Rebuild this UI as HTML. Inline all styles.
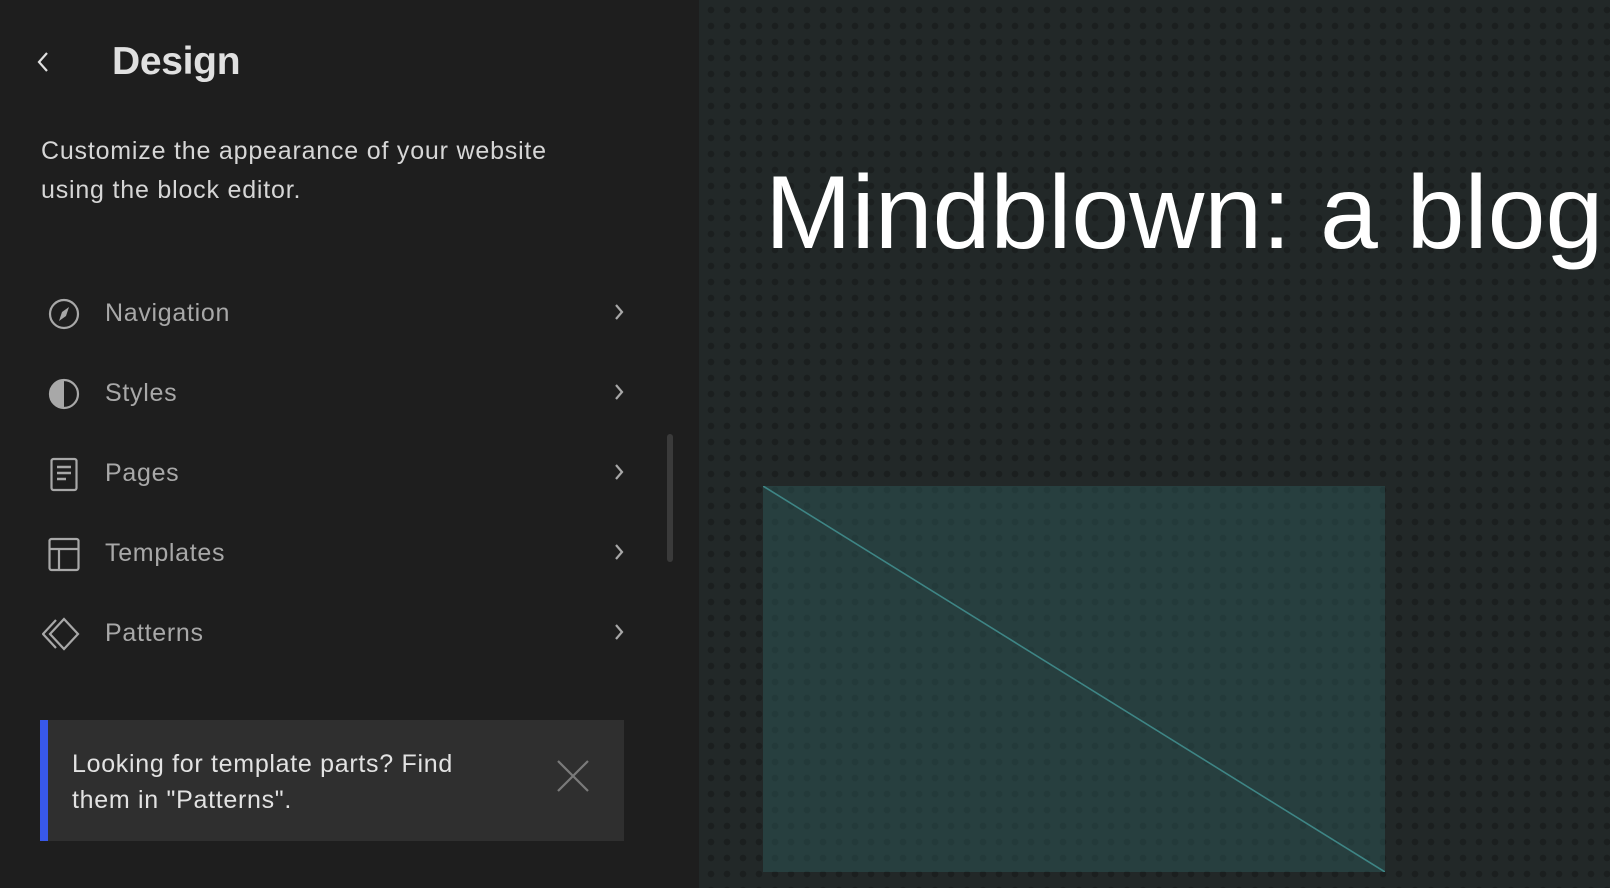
<!DOCTYPE html>
<html><head><meta charset="utf-8"><style>
*{margin:0;padding:0;box-sizing:border-box}
html,body{width:1610px;height:888px;overflow:hidden;background:#1e1e1e;font-family:"Liberation Sans",sans-serif}
.side{position:absolute;left:0;top:0;width:699px;height:888px;background:#1e1e1e}
.canvas{position:absolute;left:699px;top:0;width:911px;height:888px;background-color:#222828;
background-image:radial-gradient(circle,#1b1f1f 3px,transparent 3.6px);background-size:16px 16px;background-position:4px 2px;overflow:hidden}
h1{position:absolute;left:112px;top:40px;font-size:39px;font-weight:bold;color:#e0e0e0;letter-spacing:-0.3px}
.desc{position:absolute;left:41px;top:132px;font-size:25px;letter-spacing:0.8px;line-height:39px;color:#d6d6d6;width:640px}
.item{position:absolute;left:0;width:640px;height:40px}
.item .lbl{position:absolute;left:105px;top:7px;font-size:25px;letter-spacing:0.7px;color:#a8a8a8}
.item svg.ic{position:absolute;left:46px;top:4px}
.item svg.ch{position:absolute;left:612px;top:10px}
.scroll{position:absolute;left:667px;top:434px;width:6px;height:128px;border-radius:3px;background:#3a3a3a}
.notice{position:absolute;left:40px;top:720px;width:584px;height:121px;background:#2f2f2f;border-left:8px solid #3858e9}
.notice p{position:absolute;left:24px;top:26px;font-size:25px;letter-spacing:0.7px;line-height:36px;color:#e2e2e2;width:500px}
.title{position:absolute;left:66px;top:154px;font-size:104px;color:#fff;white-space:nowrap;letter-spacing:0}
</style></head><body>
<div class="side">
<svg style="position:absolute;left:34px;top:49px" width="20" height="26" viewBox="0 0 20 26"><path d="M13 4 L5 13 L13 22" fill="none" stroke="#e0e0e0" stroke-width="2.2"/></svg>
<h1>Design</h1>
<div class="desc">Customize the appearance of your website<br>using the block editor.</div>

<div class="item" style="top:292px"><svg class="ic" width="36" height="36" viewBox="0 0 36 36"><circle cx="18" cy="18" r="14" fill="none" stroke="#a8a8a8" stroke-width="2.2"/><path d="M23 11 L20 20 L13 25 L16 16 Z" fill="#a8a8a8"/></svg><span class="lbl">Navigation</span><svg class="ch" width="14" height="20" viewBox="0 0 14 20"><path d="M4 3 L10 10 L4 17" fill="none" stroke="#a8a8a8" stroke-width="2.2"/></svg></div>

<div class="item" style="top:372px"><svg class="ic" width="36" height="36" viewBox="0 0 36 36"><circle cx="18" cy="18" r="14" fill="none" stroke="#a8a8a8" stroke-width="2.2"/><path d="M18 4 A14 14 0 0 0 18 32 Z" fill="#a8a8a8"/></svg><span class="lbl">Styles</span><svg class="ch" width="14" height="20" viewBox="0 0 14 20"><path d="M4 3 L10 10 L4 17" fill="none" stroke="#a8a8a8" stroke-width="2.2"/></svg></div>

<div class="item" style="top:452px"><svg class="ic" width="36" height="36" viewBox="0 0 36 36"><rect x="5.5" y="3" width="25" height="31" rx="2" fill="none" stroke="#a8a8a8" stroke-width="2.2"/><path d="M11 11 H25 M11 17 H25 M11 23 H20" stroke="#a8a8a8" stroke-width="2.4"/></svg><span class="lbl">Pages</span><svg class="ch" width="14" height="20" viewBox="0 0 14 20"><path d="M4 3 L10 10 L4 17" fill="none" stroke="#a8a8a8" stroke-width="2.2"/></svg></div>

<div class="item" style="top:532px"><svg class="ic" width="36" height="36" viewBox="0 0 36 36"><rect x="3.5" y="3" width="29" height="31" rx="2" fill="none" stroke="#a8a8a8" stroke-width="2.2"/><path d="M3.5 13 H32.5 M13 13 V34" stroke="#a8a8a8" stroke-width="2.2"/></svg><span class="lbl">Templates</span><svg class="ch" width="14" height="20" viewBox="0 0 14 20"><path d="M4 3 L10 10 L4 17" fill="none" stroke="#a8a8a8" stroke-width="2.2"/></svg></div>

<div class="item" style="top:612px"><svg class="ic" style="left:42px" width="42" height="36" viewBox="0 0 42 36"><path d="M22 3 L36 18 L22 33 L8 18 Z" fill="none" stroke="#a8a8a8" stroke-width="2.2"/><path d="M14 4 L1 18 L14 32" fill="none" stroke="#a8a8a8" stroke-width="2.2"/></svg><span class="lbl">Patterns</span><svg class="ch" width="14" height="20" viewBox="0 0 14 20"><path d="M4 3 L10 10 L4 17" fill="none" stroke="#a8a8a8" stroke-width="2.2"/></svg></div>

<div class="scroll"></div>

<div class="notice"><p>Looking for template parts? Find<br>them in "Patterns".</p>
<svg style="position:absolute;left:508px;top:39px" width="34" height="34" viewBox="0 0 34 34"><path d="M2 2 L32 32 M32 2 L2 32" stroke="#7a7a7a" stroke-width="2.2"/></svg></div>
</div>

<div class="canvas">
<div class="title">Mindblown: a blog</div>
<svg style="position:absolute;left:64px;top:486px" width="622" height="386" viewBox="0 0 622 386"><rect width="622" height="386" fill="#2f5a5a" fill-opacity="0.45"/><line x1="0" y1="0" x2="622" y2="386" stroke="#3e8585" stroke-width="1.6"/></svg>
</div>
</body></html>
